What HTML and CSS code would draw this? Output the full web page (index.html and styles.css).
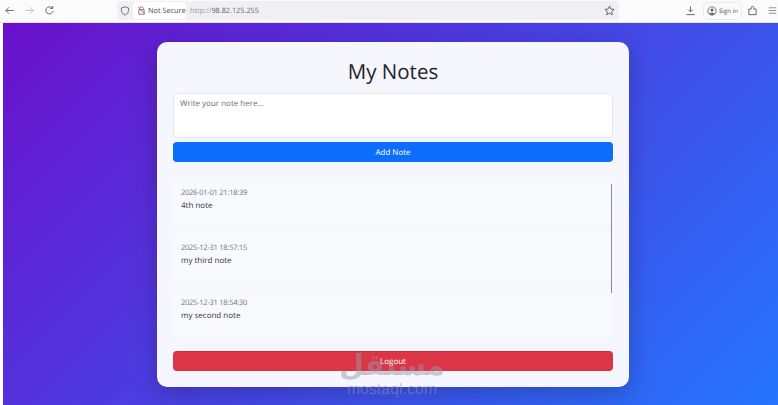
FILE: index.html
```html
<!DOCTYPE html>
<html lang="en">
<head>
<meta charset="utf-8">
<title>My Notes</title>
<link rel="stylesheet" href="styles.css">
</head>
<body>
<header class="toolbar">
  <div class="nav">
    <svg class="ic" viewBox="0 0 12 12"><path d="M10.5 6H2M5.5 2.5 2 6l3.500 3.500" class="st"/></svg>
    <svg class="ic dim" viewBox="0 0 12 12"><path d="M1.500 6H10M6.500 2.500 10 6 6.500 9.500" class="st"/></svg>
    <svg class="ic" viewBox="0 0 12 12"><path d="M9.800 6.400A3.900 3.900 0 1 1 8.600 3M9.500 1v2.800H6.700" class="st"/></svg>
  </div>
  <div class="urlbar">
    <svg class="shield" viewBox="0 0 12 12"><path d="M6 1 10.500 2.500C10.500 7 9 9.700 6 11 3 9.700 1.500 7 1.500 2.500Z" class="st"/></svg>
    <div class="secure">
      <svg class="lock" viewBox="0 0 12 12"><path d="M3.500 5V3.500a2.500 2.500 0 0 1 5 0V5M2.500 5h7v6h-7z" class="st"/><path d="M1.500 1.500 10.500 11" class="slash"/></svg>
      <span>Not Secure</span>
    </div>
    <span class="url">http://<b>98.82.125.255</b></span>
    <svg class="star" viewBox="0 0 12 12"><path d="M6 1.200 7.500 4.400 11 4.800 8.400 7.100 9.100 10.600 6 8.800 2.900 10.600 3.600 7.100 1 4.800 4.500 4.400Z" class="st"/></svg>
  </div>
  <div class="tools">
    <svg class="ic" viewBox="0 0 12 12"><path d="M6 1.500V7.500M3.500 5 6 7.500 8.500 5M1.500 10.500h9" class="st"/></svg>
    <div class="signin">
      <svg class="avatar" viewBox="0 0 12 12"><circle cx="6" cy="6" r="5" class="st"/><circle cx="6" cy="4.700" r="1.800" class="fl"/><path d="M2.800 9.300C3.500 7.700 8.500 7.700 9.200 9.300 7.500 11 4.500 11 2.800 9.300Z" class="fl"/></svg>
      <span>Sign in</span>
    </div>
    <svg class="ic" viewBox="0 0 12 12"><path d="M2 4.500H4.500V3C4.500 1 7.500 1 7.500 3V4.500H10V10.500H2Z" class="st"/></svg>
    <svg class="ic dim2" viewBox="0 0 12 12"><path d="M2 3h8M2 6h8M2 9h8" class="st"/></svg>
  </div>
</header>
<div class="page">
  <main class="card">
    <h1>My Notes</h1>
    <div class="field">Write your note here...</div>
    <button class="btn add">Add Note</button>
    <section class="list">
      <article class="note"><time>2026-01-01 21:18:39</time><p>4th note</p></article>
      <article class="note"><time>2025-12-31 18:57:15</time><p>my third note</p></article>
      <article class="note"><time>2025-12-31 18:54:30</time><p>my second note</p></article>
      <div class="thumb"></div>
    </section>
    <button class="btn logout">Logout</button>
  </main>
  <div class="mark">
    <span class="mark-ar" lang="ar" dir="rtl">مستقل</span>
    <span class="mark-en">mostaql.com</span>
  </div>
</div>
</body>
</html>
```

FILE: styles.css
```css
* { box-sizing: border-box; }
html, body { margin: 0; height: 100%; }
body {
  width: 778px;
  height: 405px;
  overflow: hidden;
  background: #fff;
  font-family: "Open Sans", "Noto Sans", sans-serif;
  text-rendering: geometricPrecision;
  display: flex;
  flex-direction: column;
}
.st { fill: none; stroke: #5b5b66; stroke-width: 1; }
.fl { fill: #5b5b66; }
.slash { fill: none; stroke: #d9374b; stroke-width: 1; }

.toolbar {
  height: 23px;
  flex: none;
  background: #fbfbfc;
  display: flex;
  align-items: center;
  padding: 0 0 1px 4px;
  border-bottom: 1px solid #e4e4e8;
}
.nav { display: flex; gap: 9px; width: 113px; flex: none; }
.ic { width: 11px; height: 11px; flex: none; }
.dim { opacity: .4; }
.dim2 { opacity: .7; }
.urlbar {
  width: 502px;
  height: 19px;
  flex: none;
  background: #f0f0f4;
  border-radius: 4px;
  display: flex;
  align-items: center;
  padding: 0 4px 0 3px;
  font-size: 7.300px;
}
.shield { width: 10px; height: 10px; flex: none; margin-right: 3px; }
.secure {
  height: 17px;
  width: 53px;
  flex: none;
  background: #fff;
  border-radius: 4px;
  display: flex;
  align-items: center;
  gap: 2px;
  padding: 0 0 0 4px;
  color: #4a4a55;
  white-space: nowrap;
}
.lock { width: 9px; height: 9px; flex: none; }
.url { margin-left: 4px; color: #9a9aa2; flex: 1; }
.url b { font-weight: 400; color: #66666f; }
.star { width: 11px; height: 11px; flex: none; }
.tools {
  flex: 1;
  display: flex;
  align-items: center;
  padding-left: 66px;
}
.signin {
  height: 18px;
  width: 39px;
  margin: 0 5px 0 7px;
  border: 1px solid #ebebef;
  border-radius: 5px;
  display: flex;
  align-items: center;
  justify-content: center;
  gap: 2px;
  font-size: 6.200px;
  color: #4a4a55;
  flex: none;
}
.avatar { width: 10px; height: 10px; flex: none; }
.tools .ic:last-child { margin-left: 9px; }

.page {
  position: relative;
  flex: 1;
  margin-left: 3px;
  background: linear-gradient(135deg, #6a11cb 0%, #2575fc 100%);
  padding: 19px 149px 0 154px;
}
.card {
  width: 472px;
  height: 345px;
  background: #f6f6fe;
  border-radius: 10px;
  padding: 16px;
  box-shadow: 0 6px 24px rgba(0, 0, 0, .22);
  display: flex;
  flex-direction: column;
}
h1 {
  margin: 0 0 6px;
  height: 29px;
  text-align: center;
  font-size: 20.500px;
  line-height: 28px;
  font-weight: 400;
  color: #212529;
}
.field {
  height: 45px;
  background: #fff;
  border: 1px solid #e6e6ee;
  border-radius: 5px;
  padding: 3px 6px;
  font-size: 8px;
  line-height: 13px;
  color: #6c6f7a;
}
.btn {
  display: block;
  width: 100%;
  height: 20px;
  border: 0;
  border-radius: 4px;
  color: #fff;
  font: 8px "Open Sans", sans-serif;
  text-rendering: geometricPrecision;
  padding: 0;
}
.add { margin-top: 4px; background: #0d6efd; }
.list {
  position: relative;
  margin-top: 17px;
  height: 163px;
  padding-right: 2px;
  display: flex;
  flex-direction: column;
  gap: 5px;
  overflow: hidden;
}
.note {
  height: 50px;
  flex: none;
  background: #f8f9fd;
  border-radius: 5px;
  padding: 9px 8px;
}
.note time {
  display: block;
  font-size: 7.500px;
  letter-spacing: -.25px;
  line-height: 11px;
  color: #6c757d;
}
.note p {
  margin: 1px 0 0;
  font-size: 8px;
  line-height: 12px;
  color: #33373d;
}
.thumb {
  position: absolute;
  top: 5px;
  right: 1px;
  width: 1.500px;
  height: 109px;
  background: #8c8c94;
}
.logout {
  margin-top: 9px;
  background: #dc3545;
  border-top: 1px solid #c9303f;
}
.mark {
  position: absolute;
  left: 324px;
  top: 325px;
  width: 130px;
  display: flex;
  flex-direction: column;
  align-items: center;
  color: rgba(150, 150, 170, .5);
  pointer-events: none;
}
.mark-ar {
  font-family: "DejaVu Sans", sans-serif;
  font-size: 29px;
  font-weight: 700;
  line-height: 34px;
}
.mark-en {
  font-family: "Liberation Sans", sans-serif;
  font-size: 15.500px;
  line-height: 16px;
  letter-spacing: .2px;
}
```
